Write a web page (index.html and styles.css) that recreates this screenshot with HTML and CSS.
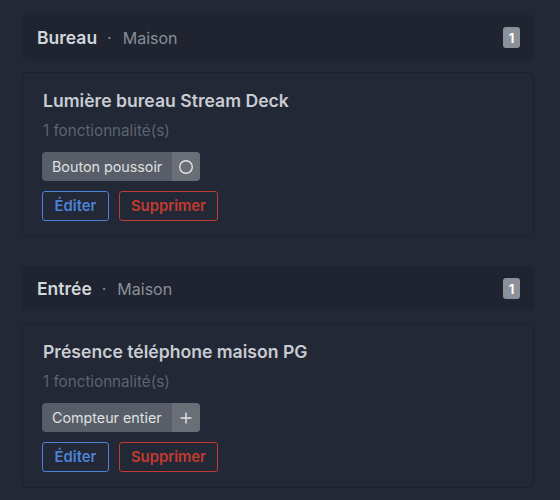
FILE: index.html
```html
<!DOCTYPE html>
<html lang="fr">
<head>
<meta charset="utf-8">
<link rel="stylesheet" href="styles.css">
</head>
<body>
<main class="list">
  <section class="room">
    <header class="room-head">
      <div class="room-name"><strong>Bureau</strong><span class="sep">·</span><span class="home">Maison</span></div>
      <span class="badge">1</span>
    </header>
    <article class="card">
      <h2 class="card-title">Lumière bureau Stream Deck</h2>
      <p class="card-sub">1 fonctionnalité(s)</p>
      <div class="pill"><span class="pill-label">Bouton poussoir</span><span class="pill-icon"><svg width="16" height="16" viewBox="0 0 16 16"><circle cx="8" cy="8" r="6.3" fill="none" stroke="#e4e5e8" stroke-width="1.4"/></svg></span></div>
      <div class="actions"><button class="btn btn-edit">Éditer</button><button class="btn btn-del">Supprimer</button></div>
    </article>
  </section>
  <section class="room">
    <header class="room-head">
      <div class="room-name"><strong>Entrée</strong><span class="sep">·</span><span class="home">Maison</span></div>
      <span class="badge">1</span>
    </header>
    <article class="card">
      <h2 class="card-title">Présence téléphone maison PG</h2>
      <p class="card-sub">1 fonctionnalité(s)</p>
      <div class="pill"><span class="pill-label">Compteur entier</span><span class="pill-icon"><svg width="16" height="16" viewBox="0 0 16 16"><path d="M8 2.5v11M2.5 8h11" stroke="#e4e5e8" stroke-width="1.4" fill="none"/></svg></span></div>
      <div class="actions"><button class="btn btn-edit">Éditer</button><button class="btn btn-del">Supprimer</button></div>
    </article>
  </section>
</main>
</body>
</html>
```
FILE: styles.css
```css
html, body {
  margin: 0;
  padding: 0;
  background: #222835;
  font-family: Inter, "Noto Sans", "Liberation Sans", sans-serif;
  color: #c9ccd2;
}
.list {
  width: 512px;
  margin-left: 22px;
  padding-top: 15px;
}
.room + .room {
  margin-top: 29px;
}
.room-head {
  height: 45px;
  box-sizing: border-box;
  display: flex;
  align-items: center;
  justify-content: space-between;
  padding: 0 14px 0 15px;
  background: #1f2430;
  border-radius: 5px;
}
.room-name {
  display: flex;
  align-items: center;
  font-size: 16px;
}
.room-name strong {
  font-size: 17.5px;
  font-weight: 600;
  color: #d3d6db;
}
.sep {
  color: #8a8f98;
  margin: 0 11px 0 10px;
}
.home {
  color: #8a8f98;
}
.badge {
  display: inline-flex;
  align-items: center;
  justify-content: center;
  width: 17px;
  height: 21px;
  background: #8b9099;
  color: #fff;
  border-radius: 3px;
  font-size: 13px;
  font-weight: 700;
}
.card {
  margin-top: 12px;
  border: 1px solid #1c212c;
  border-radius: 5px;
  padding: 16px 20px 15px 19px;
  background: #222835;
}
.card-title {
  margin: 0 0 0 1px;
  font-size: 17.6px;
  line-height: 24px;
  font-weight: 600;
  color: #c9ccd2;
}
.card-sub {
  margin: 8px 0 0 1px;
  font-size: 15.2px;
  line-height: 20px;
  color: #5d6370;
}
.pill {
  margin-top: 11px;
  display: inline-flex;
  height: 29px;
  border-radius: 4px;
  overflow: hidden;
  background: #585d67;
}
.pill-label {
  display: flex;
  align-items: center;
  padding: 0 10px 0 10px;
  font-size: 14.3px;
  color: #dfe0e3;
}
.pill-icon {
  display: flex;
  align-items: center;
  justify-content: center;
  width: 28px;
  background: #696e77;
}
.actions {
  display: flex;
  gap: 10px;
  margin-top: 10px;
}
.btn {
  height: 30px;
  box-sizing: border-box;
  background: transparent;
  border-radius: 3px;
  font-family: inherit;
  font-size: 14.8px;
  font-weight: 600;
  padding: 0;
  cursor: pointer;
}
.btn-edit {
  border: 1px solid #4d82d6;
  color: #4d82d6;
  width: 67px;
}
.btn-del {
  border: 1px solid #c43a30;
  color: #c43a30;
  width: 99px;
}
```
